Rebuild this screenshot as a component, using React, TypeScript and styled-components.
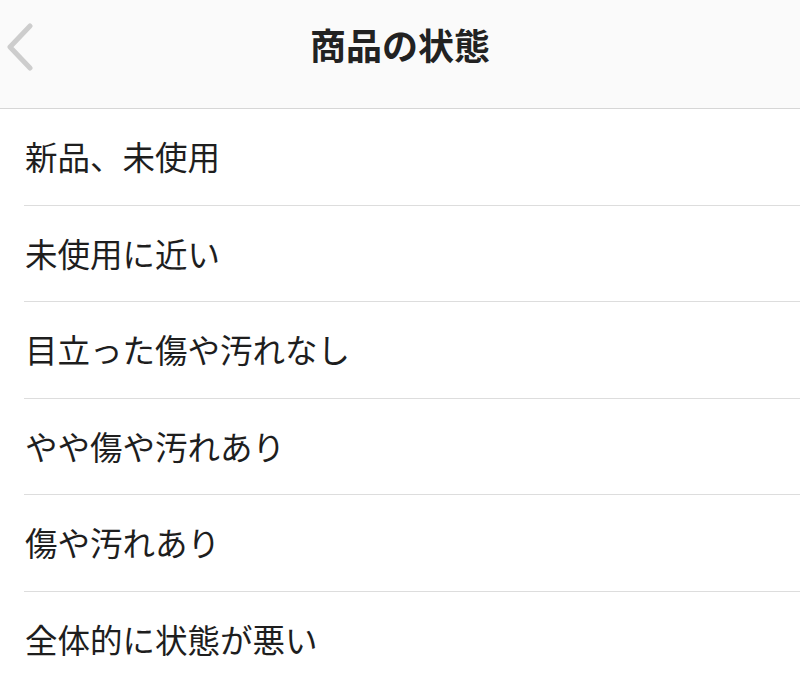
import React from "react";
import styled, { createGlobalStyle } from "styled-components";

const conditions = [
  "新品、未使用",
  "未使用に近い",
  "目立った傷や汚れなし",
  "やや傷や汚れあり",
  "傷や汚れあり",
  "全体的に状態が悪い",
];

const App: React.FC = () => {
  return (
    <>
      <GlobalStyle />
      <Page>
        <Header>
          <BackButton aria-label="戻る">
            <svg width="30" height="50" viewBox="0 0 30 50">
              <path
                d="M24 5 L4 26 L24 47"
                fill="none"
                stroke="#cdcdcd"
                strokeWidth="5"
                strokeLinecap="round"
                strokeLinejoin="round"
              />
            </svg>
          </BackButton>
          <Title>商品の状態</Title>
        </Header>
        <List>
          {conditions.map((label) => (
            <Item key={label}>
              <Label>{label}</Label>
            </Item>
          ))}
        </List>
      </Page>
    </>
  );
};

export default App;

const GlobalStyle = createGlobalStyle`
  html, body {
    margin: 0;
    padding: 0;
    background: #ffffff;
  }

  body {
    font-family: "Noto Sans CJK JP", "Noto Sans", sans-serif;
    color: #222222;
  }
`;

const Page = styled.div`
  width: 800px;
  height: 684px;
  overflow: hidden;
  background: #ffffff;
`;

const Header = styled.header`
  position: relative;
  height: 108px;
  display: flex;
  align-items: center;
  justify-content: center;
  background: #fafafa;
  border-bottom: 1px solid #d6d6d6;
`;

const BackButton = styled.button`
  position: absolute;
  left: 6px;
  top: 21px;
  padding: 0;
  border: none;
  background: transparent;
  display: flex;
`;

const Title = styled.h1`
  margin: 0 0 20px 0;
  font-size: 36px;
  font-weight: 700;
  letter-spacing: 0;
  color: #222222;
`;

const List = styled.ul`
  list-style: none;
  margin: 0;
  padding: 0 0 0 24px;
`;

const Item = styled.li`
  height: 95.5px;
  display: flex;
  align-items: center;
  border-bottom: 1px solid #dddddd;

  &:last-child {
    border-bottom: none;
  }
`;

const Label = styled.span`
  font-size: 32.5px;
  font-weight: 400;
  color: #1e1e1e;
  padding-left: 1px;
  padding-bottom: 2px;
`;
